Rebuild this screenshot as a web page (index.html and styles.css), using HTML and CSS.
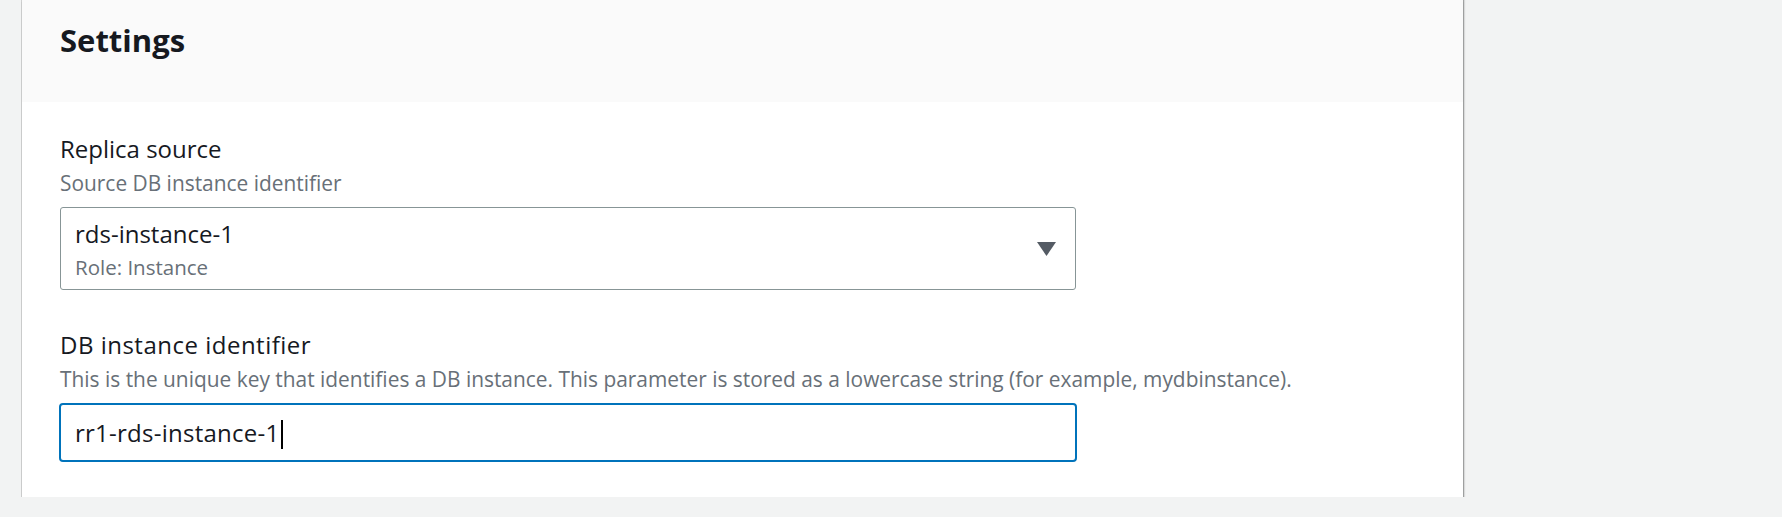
FILE: index.html
```html
<!DOCTYPE html>
<html lang="en">
<head>
<meta charset="utf-8">
<title>Settings</title>
<link rel="stylesheet" href="styles.css">
</head>
<body>
<div class="page">
  <section class="card">
    <header class="card-header">
      <h2 class="card-title">Settings</h2>
    </header>
    <div class="card-body">
      <div class="field">
        <div class="field-label">Replica source</div>
        <div class="field-desc">Source DB instance identifier</div>
        <div class="select">
          <div class="select-text">
            <div class="select-value">rds-instance-1</div>
            <div class="select-sub">Role: Instance</div>
          </div>
          <svg class="caret-down" width="19" height="14" viewBox="0 0 19 14" aria-hidden="true">
            <polygon points="0,0 19,0 9.5,14" fill="#545b64"/>
          </svg>
        </div>
      </div>
      <div class="field field-second">
        <div class="field-label field-label-wide">DB instance identifier</div>
        <div class="field-desc">This is the unique key that identifies a DB instance. This parameter is stored as a lowercase string (for example, mydbinstance).</div>
        <div class="input"><span class="input-text">rr1-rds-instance-1</span><span class="text-caret"></span></div>
      </div>
    </div>
  </section>
</div>
</body>
</html>
```

FILE: styles.css
```css
html, body {
  margin: 0;
  padding: 0;
  background: #f2f3f3;
  font-family: "Open Sans", "Noto Sans", Arial, sans-serif;
  color: #16191f;
}

.page {
  padding-left: 22px;
  width: 1441px;
}

.card {
  background: #ffffff;
  box-shadow:
    0 1px 0 0 rgba(0, 0, 0, 0.38),
    0 2px 1px 0 rgba(0, 0, 0, 0.12),
    1px 0 0 0 rgba(0, 0, 0, 0.25),
    2px 0 1px 0 rgba(0, 0, 0, 0.1),
    -1px 0 0 0 rgba(0, 0, 0, 0.14);
}

.card-header {
  background: #fafafa;
  height: 102px;
  box-sizing: border-box;
  padding: 20px 38px 0 38px;
}

.card-title {
  margin: 0;
  font-size: 31px;
  line-height: 40px;
  font-weight: 700;
  color: #16191f;
}

.card-body {
  padding: 30px 38px 35px 38px;
}

.field-second {
  margin-top: 38px;
}

.field-label {
  font-size: 24px;
  line-height: 34px;
  color: #16191f;
}

.field-label-wide {
  letter-spacing: 0.5px;
}

.field-desc {
  font-size: 20.9px;
  line-height: 34px;
  color: #687078;
  margin-bottom: 7px;
}

.select {
  width: 1016px;
  height: 83px;
  box-sizing: border-box;
  border: 1px solid #879596;
  border-radius: 3px;
  padding: 10px 19px 0 14px;
  display: flex;
  align-items: flex-start;
  justify-content: space-between;
}

.select-value {
  font-size: 24px;
  line-height: 32px;
  color: #16191f;
}

.select-sub {
  font-size: 20.5px;
  line-height: 34px;
  color: #687078;
}

.caret-down {
  display: block;
  align-self: center;
  margin-top: -10px;
}

.input {
  width: 1018px;
  height: 59px;
  box-sizing: border-box;
  margin-left: -1px;
  border: 2px solid #0073bb;
  border-radius: 4px;
  padding: 0 14px;
  display: flex;
  align-items: center;
}

.input-text {
  font-size: 24px;
  line-height: 32px;
  letter-spacing: 0.25px;
  color: #16191f;
}

.text-caret {
  display: inline-block;
  width: 2px;
  height: 29px;
  background: #000000;
  margin-left: 2px;
  margin-top: 4px;
}
```
